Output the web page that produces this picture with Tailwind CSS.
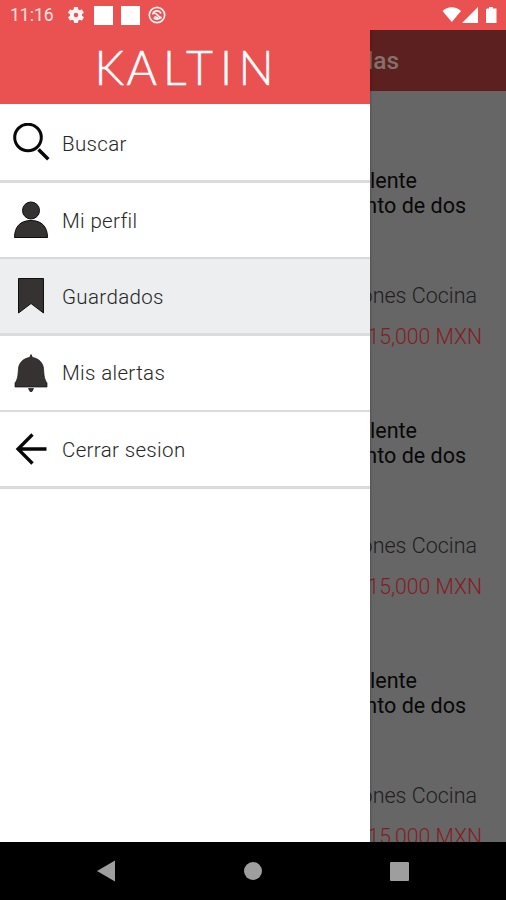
<!DOCTYPE html>
<html lang="es">
<head>
<meta charset="utf-8">
<title>Kaltin</title>
<script src="https://cdn.jsdelivr.net/npm/@tailwindcss/browser@4"></script>
</head>
<body class="h-[900px] w-[506px] overflow-hidden bg-black font-['Roboto',sans-serif]">
<div class="flex h-[900px] w-[506px] flex-col">
  <header class="flex h-[30px] shrink-0 items-center bg-[#ea5151] text-white">
    <span class="ml-[10px] mt-[2px] w-[48px] text-[17.500px] leading-none whitespace-nowrap text-[#ffe4e2]">11:16</span>
    <svg class="ml-[10px]" width="16" height="16" viewBox="2 2 20 20" fill="#fff4f3"><path d="M19.4 13c0-.3.1-.6.1-1s0-.7-.1-1l2.1-1.600c.2-.2.3-.4.1-.7l-2-3.400c-.1-.2-.4-.3-.6-.2l-2.500 1c-.5-.4-1.100-.7-1.700-1l-.4-2.600c0-.3-.2-.5-.5-.5h-4c-.2 0-.5.2-.5.4L9 5.100c-.6.2-1.200.6-1.700 1l-2.500-1c-.2-.1-.5 0-.6.2l-2 3.400c-.1.3 0 .5.1.7L4.500 11a7 7 0 0 0 0 2l-2.100 1.600c-.2.2-.3.4-.1.7l2 3.400c.1.2.4.3.6.2l2.500-1c.5.4 1.100.7 1.700 1l.4 2.600c0 .3.2.5.5.5h4c.2 0 .5-.2.5-.4l.4-2.700c.6-.2 1.200-.6 1.700-1l2.500 1c.2.1.5 0 .6-.2l2-3.400c.1-.3.1-.5-.1-.7zM12 14.800a2.800 2.800 0 1 1 0-5.600 2.800 2.800 0 0 1 0 5.600z"/></svg>
    <span class="ml-[10px] mt-[1px] h-[19px] w-[19px] bg-white"></span>
    <span class="ml-[8px] mt-[1px] h-[19px] w-[19px] bg-white"></span>
    <svg class="ml-[8px]" width="18" height="18" viewBox="0 0 18 18" fill="none" stroke="#fff0ef" stroke-width="1.700"><circle cx="9" cy="9" r="7.700"/><path d="M4.800 8.500C5.300 4.300 11 3.500 13 7.500M13 10.500c-1.200 3-5.500 3.500-7.300 1M5 7c3-1.500 4.500 3.500 8.500 5.500M6.500 10.500l3.500 1.500"/></svg>
    <svg class="ml-auto mr-[8px]" width="56" height="18" viewBox="0 0 56 18" fill="#fff"><path d="M.5 5C5-.1 14.500-.1 19 5L9.800 16z"/><path d="M36 1v16H20z"/><path d="M45 2.500h2V1h4v1.500h3.500v14.500H44V3.500z"/></svg>
  </header>
  <main class="flex h-[812px] shrink-0 overflow-hidden">
    <nav class="relative z-10 flex w-[370px] shrink-0 flex-col bg-white text-[20.500px] font-light tracking-[0.350px] text-[#262626] shadow-[0_0_3px_rgba(0,0,0,0.35)]">
      <div class="h-[74px] bg-[#ea5151]">
        <svg width="370" height="74" viewBox="0 0 370 74"><text x="94.500 126.500 163 186 220 238.500" y="55" fill="#fff" stroke="#fff" stroke-width=".5" font-family="Lato, sans-serif" font-weight="300" font-size="46.500">KALTIN</text></svg>
      </div>
      <a class="flex h-[79px] items-center border-b-[3px] border-[#dbdbdb]"><svg class="mr-[12px] ml-[12px]" width="38" height="38" viewBox="0 0 38 38" fill="none" stroke="#080808"><circle cx="16" cy="14.500" r="13.300" stroke-width="3"/><path d="m26.500 26.500 9.800 9.800" stroke-width="3.500"/></svg><span class="pt-[4px]">Buscar</span></a>
      <a class="flex h-[76px] items-center border-b-[2px] border-[#d7d9dc]"><svg class="mr-[12px] ml-[12px]" width="38" height="38" viewBox="0 0 38 38" fill="#353231" stroke="#0c0c0c"><circle cx="19" cy="9.500" r="8.500"/><path d="M2.500 36.500c0-10.500 5.500-17 16.500-17s16.500 6.500 16.500 17z"/></svg><span class="pt-[2px]">Mi perfil</span></a>
      <a class="flex h-[77px] items-center border-b-[3px] border-[#dadcdf] bg-[#edeef0]"><svg class="mr-[12px] ml-[12px]" width="38" height="38" viewBox="0 0 38 38" fill="#353231" stroke="#101010"><path d="M6.500 1.500h25v34.500L19 26.500 6.500 36z"/></svg><span class="pt-[2px]">Guardados</span></a>
      <a class="flex h-[76px] items-center border-b-[2px] border-[#dbdbdb]"><svg class="mr-[12px] ml-[12px]" width="38" height="38" viewBox="0 0 38 38" fill="#353231" stroke="#151313" stroke-width=".7"><path d="M17.500 3.500 19 .5l1.500 3c6 1 10.500 5 11 11 .5 8 1 11 3.500 14.500V33H3v-4c2.500-3.500 3-6.500 3.500-14.500.5-6 5-10 11-11z"/><path d="M16.500 34.500h5L20 37.500h-2z"/></svg><span class="pt-[1px]">Mis alertas</span></a>
      <a class="flex h-[77px] items-center border-b-[3px] border-[#dbdbdb]"><svg class="mr-[12px] ml-[12px]" width="38" height="38" viewBox="0 0 38 38" fill="none" stroke="#080808" stroke-width="3.300"><path d="M34.500 19H6M20.500 4.500 6 19l14.500 14.500"/></svg><span class="pt-[2px]">Cerrar sesion</span></a>
    </nav>
    <section class="flex min-w-0 flex-1 flex-col overflow-hidden bg-[#666] whitespace-nowrap text-[21.500px] text-[#080808]">
      <h1 class="flex h-[61px] shrink-0 items-center justify-end bg-[#5d2020] pr-[107px] pt-[2px] text-[24.500px] font-medium text-[#85716c]">Guardadas</h1>
      <article class="flex h-[250px] shrink-0 flex-col pt-[77px] leading-[25px]">
        <p class="flex justify-end pr-[89px]">Excelente</p>
        <p class="flex justify-end pr-[40px]">departamento de dos</p>
        <p class="mt-[65px] flex justify-end pr-[29px] font-light text-[#202020]">Habitaciones Cocina</p>
        <p class="mt-[16px] flex justify-end pr-[24px] text-[21.200px] font-light text-[#851c23]">$15,000 MXN</p>
      </article>
      <article class="flex h-[250px] shrink-0 flex-col pt-[77px] leading-[25px]">
        <p class="flex justify-end pr-[89px]">Excelente</p>
        <p class="flex justify-end pr-[40px]">departamento de dos</p>
        <p class="mt-[65px] flex justify-end pr-[29px] font-light text-[#202020]">Habitaciones Cocina</p>
        <p class="mt-[16px] flex justify-end pr-[24px] text-[21.200px] font-light text-[#851c23]">$15,000 MXN</p>
      </article>
      <article class="flex h-[250px] shrink-0 flex-col pt-[77px] leading-[25px]">
        <p class="flex justify-end pr-[89px]">Excelente</p>
        <p class="flex justify-end pr-[40px]">departamento de dos</p>
        <p class="mt-[65px] flex justify-end pr-[29px] font-light text-[#202020]">Habitaciones Cocina</p>
        <p class="mt-[16px] flex justify-end pr-[24px] text-[21.200px] font-light text-[#851c23]">$15,000 MXN</p>
      </article>
    </section>
  </main>
  <footer class="flex h-[58px] shrink-0 items-center justify-between bg-black pr-[97px] pl-[97px]">
    <svg width="18" height="22" viewBox="0 0 18 22" fill="#9e9e9e"><path d="M18 .5v21L0 11z"/></svg>
    <span class="ml-[1px] h-[18px] w-[18px] rounded-full bg-[#9e9e9e]"></span>
    <span class="h-[19px] w-[19px] rounded-[1px] bg-[#9e9e9e]"></span>
  </footer>
</div>
</body>
</html>
